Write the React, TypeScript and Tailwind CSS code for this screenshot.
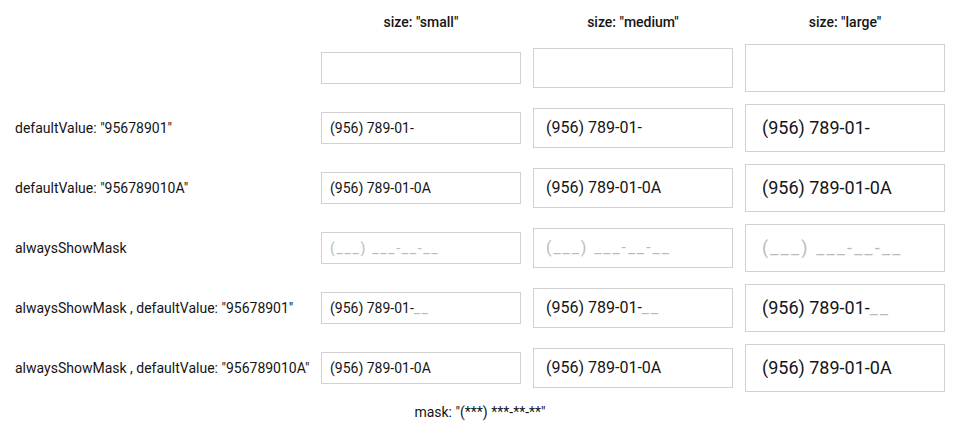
const font = "font-['Roboto','Liberation_Sans',sans-serif]";

type Size = "small" | "medium" | "large";

const sizeClass: Record<Size, string> = {
  small: "h-8 px-2 text-sm",
  medium: "h-10 px-3 text-base",
  large: "h-12 px-4 text-lg",
};

interface Row {
  label: string;
  value: string;
  rest: string;
}

const rows: Row[] = [
  { label: "", value: "", rest: "" },
  { label: 'defaultValue: "95678901"', value: "(956) 789-01-", rest: "" },
  { label: 'defaultValue: "956789010A"', value: "(956) 789-01-0A", rest: "" },
  { label: "alwaysShowMask", value: "", rest: "(___) ___-__-__" },
  { label: 'alwaysShowMask , defaultValue: "95678901"', value: "(956) 789-01-", rest: "__" },
  { label: 'alwaysShowMask , defaultValue: "956789010A"', value: "(956) 789-01-0A", rest: "" },
];

const sizes: Size[] = ["small", "medium", "large"];

function MaskField({ size, value, rest }: { size: Size; value: string; rest: string }) {
  return (
    <div
      className={`flex w-[200px] items-center border border-[#d2d2d2] bg-white text-[#151515] whitespace-pre ${sizeClass[size]}`}
    >
      <span>{value}</span>
      {rest && <span className="tracking-[0.12em] text-[#b8bbbe]">{rest}</span>}
    </div>
  );
}

export default function App() {
  return (
    <div className={`min-h-screen bg-white px-[15px] text-[#151515] ${font}`}>
      <div className="grid grid-cols-[294px_200px_200px_200px] gap-x-3">
        <div className="h-[38px]" />
        {sizes.map((s) => (
          <div key={s} className="h-[38px] pt-3 text-center text-sm font-medium leading-5">
            size: "{s}"
          </div>
        ))}
        {rows.map((row, i) => (
          <div key={i} className="contents">
            <div className="flex h-[60px] items-center whitespace-nowrap text-sm">{row.label}</div>
            {sizes.map((s) => (
              <div key={s} className="flex h-[60px] items-center">
                <MaskField size={s} value={row.value} rest={row.rest} />
              </div>
            ))}
          </div>
        ))}
      </div>
      <div className="mt-1 text-center text-sm leading-5">mask: "(***) ***-**-**"</div>
    </div>
  );
}
